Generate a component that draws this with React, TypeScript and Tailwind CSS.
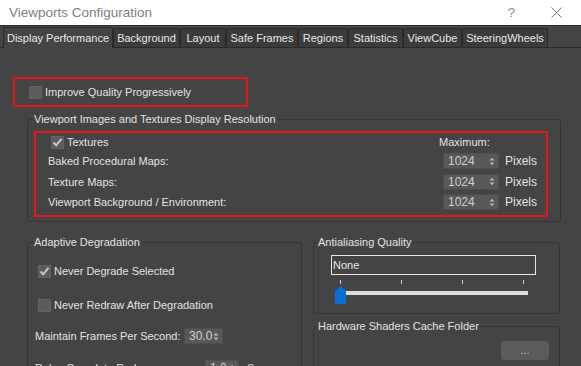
import React from 'react';

const tabs = [
  { label: 'Display Performance', w: 'w-[110px]', active: true },
  { label: 'Background', w: 'w-[67px]' },
  { label: 'Layout', w: 'w-[46px]' },
  { label: 'Safe Frames', w: 'w-[72px]' },
  { label: 'Regions', w: 'w-[50px]' },
  { label: 'Statistics', w: 'w-[55px]' },
  { label: 'ViewCube', w: 'w-[59px]' },
  { label: 'SteeringWheels', w: 'w-[86px]' },
];

function CheckBox({ checked }: { checked?: boolean }) {
  return (
    <div className="w-[13px] h-[13px] bg-[#5c5c5c] border border-[#626262] flex items-center justify-center shrink-0">
      {checked && (
        <svg width="11" height="11" viewBox="0 0 11 11">
          <path d="M1.5 5.5 L4.2 8.3 L9.5 1.8" fill="none" stroke="#c9c9c9" strokeWidth="2" />
        </svg>
      )}
    </div>
  );
}

function Spinner({ value, w = 'w-[56px]' }: { value: string; w?: string }) {
  return (
    <div className={`${w} h-[16px] bg-[#585858] border border-[#4e4e4e] flex items-center justify-between pl-[4px] pr-[3px] text-[12px] text-[#cfcfcf] shrink-0`}>
      <span className="leading-none">{value}</span>
      <svg width="6" height="9" viewBox="0 0 6 9">
        <path d="M0.5 3.5 L3 0.8 L5.5 3.5 Z" fill="#b5b5b5" />
        <path d="M0.5 5.5 L3 8.2 L5.5 5.5 Z" fill="#b5b5b5" />
      </svg>
    </div>
  );
}

function Pixels({ value }: { value: string }) {
  return (
    <div className="w-[103px] flex items-center shrink-0">
      <Spinner value={value} />
      <span className="ml-[6px] text-[12px]">Pixels</span>
    </div>
  );
}

export default function App() {
  return (
    <div className="w-[581px] h-[366px] overflow-hidden bg-[#444444] flex flex-col text-[11px] text-[#e2e2e2] leading-[14px] whitespace-nowrap" style={{ fontFamily: '"Liberation Sans", Arial, sans-serif' }}>
      {/* title bar */}
      <div className="h-[26px] bg-white flex items-center pl-[9px] shrink-0 border-b border-[#2e2e2e]">
        <span className="text-[13.5px] text-[#808080]">Viewports Configuration</span>
        <span className="ml-auto text-[13px] text-[#8a8a8a] mr-[36px]">?</span>
        <svg width="11" height="11" viewBox="0 0 11 11" className="mr-[19px]">
          <path d="M0.5 0.5 L10.5 10.5 M10.5 0.5 L0.5 10.5" stroke="#7a7a7a" strokeWidth="1" />
        </svg>
      </div>

      {/* tabs */}
      <div className="h-[22px] flex items-end pl-[3px] border-b border-[#2a2a2a] shrink-0">
        {tabs.map((t) => (
          <div
            key={t.label}
            className={`${t.w} flex items-center justify-center border border-b-0 border-[#2a2a2a] rounded-t-[2px] text-[11px] text-[#e8e8e8] ${t.active ? 'h-[21px] bg-[#444444] -mb-px pb-px' : 'h-[19px] bg-[#3b3b3b]'}`}
          >
            {t.label}
          </div>
        ))}
      </div>

      {/* improve quality */}
      <div className="mt-[29px] ml-[13px] w-[235px] h-[30px] border-2 border-[#e8141c] flex items-center pl-[14px] gap-[3px] shrink-0">
        <CheckBox />
        <span>Improve Quality Progressively</span>
      </div>

      {/* viewport images group */}
      <fieldset className="mt-[5px] ml-[27px] w-[534px] border border-[#363636] rounded-[3px] shrink-0 pb-[4px]">
        <legend className="ml-[5px] px-[1px]">Viewport Images and Textures Display Resolution</legend>
        <div className="mt-[5px] ml-[6px] w-[514px] h-[86px] border-2 border-[#e8141c] flex flex-col">
          <div className="h-[18px] flex items-center pl-[15px]">
            <CheckBox checked />
            <span className="ml-[3px] flex-1">Textures</span>
            <span className="w-[107px]">Maximum:</span>
          </div>
          <div className="h-[20px] flex items-center pl-[12px]">
            <span className="flex-1">Baked Procedural Maps:</span>
            <Pixels value="1024" />
          </div>
          <div className="h-[21px] flex items-center pl-[12px]">
            <span className="flex-1">Texture Maps:</span>
            <Pixels value="1024" />
          </div>
          <div className="h-[20px] flex items-center pl-[12px]">
            <span className="flex-1">Viewport Background / Environment:</span>
            <Pixels value="1024" />
          </div>
        </div>
      </fieldset>

      {/* lower groups */}
      <div className="flex mt-[13px] shrink-0">
        <fieldset className="ml-[27px] w-[275px] h-[200px] border border-[#363636] rounded-[3px]">
          <legend className="ml-[5px] px-[1px]">Adaptive Degradation</legend>
          <div className="mt-[15px] pl-[10px] flex items-center gap-[3px] h-[14px]">
            <CheckBox checked />
            <span>Never Degrade Selected</span>
          </div>
          <div className="mt-[20px] pl-[10px] flex items-center gap-[3px] h-[14px]">
            <CheckBox />
            <span>Never Redraw After Degradation</span>
          </div>
          <div className="mt-[15px] pl-[7px] flex items-center h-[18px]">
            <span className="w-[149px]">Maintain Frames Per Second:</span>
            <Spinner value="30.0" w="w-[39px]" />
          </div>
          <div className="mt-[14px] pl-[7px] flex items-center h-[18px]">
            <span className="w-[170px]">Delay Complete Redraw:</span>
            <Spinner value="1.0" w="w-[34px]" />
            <span className="ml-[8px]">Sec</span>
          </div>
        </fieldset>

        <div className="ml-[11px] w-[247px] flex flex-col">
          <fieldset className="h-[79px] border border-[#363636] rounded-[3px]">
            <legend className="ml-[3px] px-[1px]">Antialiasing Quality</legend>
            <div className="ml-[17px] mt-[6px] w-[205px] h-[20px] border border-[#e6e6e6] flex items-center pl-[1px] text-[#e6e6e6]">
              None
            </div>
            <div className="relative ml-[17px] w-[205px] h-[30px]">
              <div className="flex justify-between pl-[9px] pr-[12px] pt-[5px]">
                <div className="w-px h-[4px] bg-[#cfcfcf]" />
                <div className="w-px h-[4px] bg-[#cfcfcf]" />
                <div className="w-px h-[4px] bg-[#cfcfcf]" />
                <div className="w-px h-[4px] bg-[#cfcfcf]" />
              </div>
              <div className="ml-[5px] mt-[7px] w-[192px] h-[4px] bg-[#dcdcdc]" />
              <svg width="11" height="18" viewBox="0 0 11 18" className="absolute left-[4px] top-[11px]">
                <path d="M0 5 L5.5 0 L11 5 L11 18 L0 18 Z" fill="#0a6fd4" />
              </svg>
            </div>
          </fieldset>
          <fieldset className="mt-[5px] h-[80px] border border-[#363636] rounded-[3px] flex flex-col">
            <legend className="ml-[3px] px-[1px]">Hardware Shaders Cache Folder</legend>
            <div className="mt-[8px] ml-auto mr-[10px] w-[48px] h-[19px] bg-[#5b5b5b] rounded-[3px] flex items-center justify-center text-[#cfcfcf] leading-none">
              ...
            </div>
          </fieldset>
        </div>
      </div>
    </div>
  );
}
